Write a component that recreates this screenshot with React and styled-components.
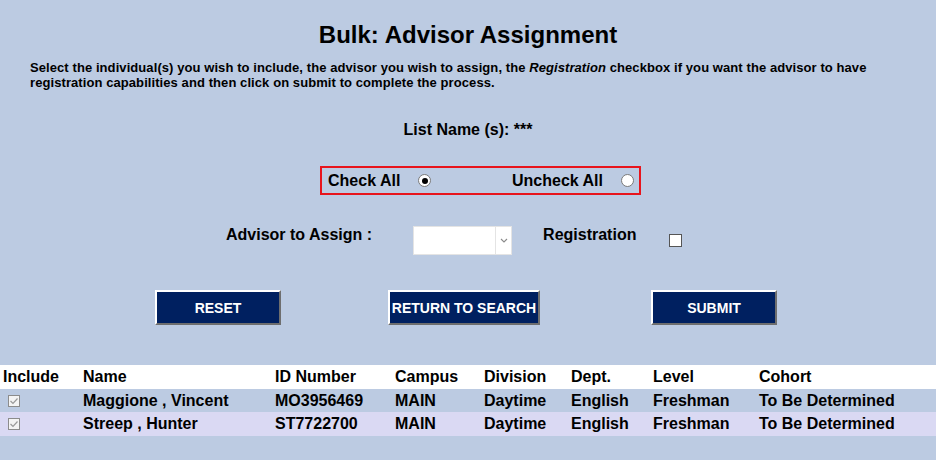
import React from 'react'
import styled, { createGlobalStyle } from 'styled-components'

const GlobalStyle = createGlobalStyle`
  html, body {
    margin: 0;
    padding: 0;
    background: #bccbe2;
  }
  body {
    font-family: "Liberation Sans", Arial, sans-serif;
    color: #000;
  }
`

const students = [
  { name: 'Maggione , Vincent', id: 'MO3956469', campus: 'MAIN', division: 'Daytime', dept: 'English', level: 'Freshman', cohort: 'To Be Determined' },
  { name: 'Streep , Hunter', id: 'ST7722700', campus: 'MAIN', division: 'Daytime', dept: 'English', level: 'Freshman', cohort: 'To Be Determined' },
]

export default function App() {
  return (
    <Page>
      <GlobalStyle />
      <Title>Bulk: Advisor Assignment</Title>
      <Intro>
        Select the individual(s) you wish to include, the advisor you wish to assign, the <em>Registration</em> checkbox if you want the advisor to have registration capabilities and then click on submit to complete the process.
      </Intro>
      <ListName>List Name (s): ***</ListName>

      <CheckBox>
        <RadioGroup>
          <span>Check All</span>
          <Radio checked />
        </RadioGroup>
        <RadioGroup>
          <span>Uncheck All</span>
          <Radio />
        </RadioGroup>
      </CheckBox>

      <AdvisorRow>
        <Label>Advisor to Assign :</Label>
        <SelectBox>
          <SelectArrow>
            <svg width="8" height="5" viewBox="0 0 8 5">
              <path d="M1 1 L4 4 L7 1" fill="none" stroke="#8a8a8a" strokeWidth="1.1" />
            </svg>
          </SelectArrow>
        </SelectBox>
        <Label $indent>Registration</Label>
        <Box />
      </AdvisorRow>

      <Buttons>
        <Button $w={126}>RESET</Button>
        <Button $w={152}>RETURN TO SEARCH</Button>
        <Button $w={126}>SUBMIT</Button>
      </Buttons>

      <Table>
        <HeadRow>
          <Cell>Include</Cell>
          <Cell>Name</Cell>
          <Cell>ID Number</Cell>
          <Cell>Campus</Cell>
          <Cell>Division</Cell>
          <Cell>Dept.</Cell>
          <Cell>Level</Cell>
          <Cell>Cohort</Cell>
        </HeadRow>
        {students.map((s, i) => (
          <BodyRow key={s.id} $alt={i % 2 === 1}>
            <Cell>
              <TickBox>
                <svg width="10" height="10" viewBox="0 0 10 10">
                  <path d="M1.5 5 L4 7.5 L8.5 2.5" fill="none" stroke="#9a9a9a" strokeWidth="1.2" />
                </svg>
              </TickBox>
            </Cell>
            <Cell>{s.name}</Cell>
            <Cell>{s.id}</Cell>
            <Cell>{s.campus}</Cell>
            <Cell>{s.division}</Cell>
            <Cell>{s.dept}</Cell>
            <Cell>{s.level}</Cell>
            <Cell>{s.cohort}</Cell>
          </BodyRow>
        ))}
      </Table>
    </Page>
  )
}

const Page = styled.div`
  padding-top: 21px;
  width: 936px;
`

const Title = styled.h1`
  margin: 0;
  font-size: 24px;
  line-height: 28px;
  font-weight: bold;
  text-align: center;
`

const Intro = styled.p`
  margin: 11px 0 0;
  padding: 0 20px 0 30px;
  font-size: 13px;
  letter-spacing: 0.08px;
  line-height: 15px;
  font-weight: bold;
  em {
    font-style: italic;
  }
`

const ListName = styled.div`
  margin-top: 31px;
  font-size: 16px;
  line-height: 18px;
  font-weight: bold;
  text-align: center;
`

const CheckBox = styled.div`
  margin: 27px 0 0 320px;
  width: 321px;
  height: 29px;
  box-sizing: border-box;
  border: 2px solid #e8141c;
  display: flex;
  align-items: center;
  justify-content: space-between;
  padding: 0 5px 0 6px;
`

const RadioGroup = styled.label`
  display: flex;
  align-items: center;
  gap: 18px;
  font-size: 16px;
  font-weight: bold;
`

const Radio = styled.span`
  width: 13px;
  height: 13px;
  box-sizing: border-box;
  border-radius: 50%;
  border: 1px solid #7a7a7a;
  background: #fff;
  position: relative;
  &::after {
    content: '';
    display: ${p => (p.checked ? 'block' : 'none')};
    position: absolute;
    left: 2.5px;
    top: 2.5px;
    width: 6px;
    height: 6px;
    border-radius: 50%;
    background: #000;
  }
`

const AdvisorRow = styled.div`
  margin-top: 31px;
  padding-left: 226px;
  display: flex;
  align-items: flex-start;
`

const Label = styled.span`
  font-size: 16px;
  line-height: 18px;
  font-weight: bold;
  margin-left: ${p => (p.$indent ? '31px' : '0')};
  margin-right: ${p => (p.$indent ? '33px' : '41px')};
`

const SelectBox = styled.div`
  width: 99px;
  height: 29px;
  box-sizing: border-box;
  background: #fff;
  border: 1px solid #e4e4e4;
  display: flex;
  justify-content: flex-end;
`

const SelectArrow = styled.div`
  width: 15px;
  border-left: 1px solid #e4e4e4;
  display: flex;
  align-items: center;
  justify-content: center;
`

const Box = styled.span`
  margin-top: 8px;
  width: 13px;
  height: 13px;
  box-sizing: border-box;
  border: 1px solid #555;
  background: #fff;
`

const Buttons = styled.div`
  margin-top: 35px;
  padding-left: 155px;
  display: grid;
  grid-template-columns: 233px 263px 126px;
`

const Button = styled.button`
  width: ${p => p.$w}px;
  height: 35px;
  box-sizing: border-box;
  background: #002060;
  color: #fff;
  font-family: "Liberation Sans", Arial, sans-serif;
  font-size: 14px;
  font-weight: bold;
  padding: 0;
  border: 2px solid;
  border-color: #fff #6e6e6e #6e6e6e #fff;
  cursor: pointer;
`

const Table = styled.div`
  margin-top: 40px;
  font-size: 16px;
  font-weight: bold;
`

const Row = styled.div`
  display: grid;
  grid-template-columns: 80px 192px 120px 89px 87px 82px 106px 1fr;
  align-items: center;
`

const HeadRow = styled(Row)`
  height: 24px;
  background: #fff;
`

const BodyRow = styled(Row)`
  height: ${p => (p.$alt ? '24px' : '23px')};
  background: ${p => (p.$alt ? '#dad9f3' : '#bccbe2')};
`

const Cell = styled.div`
  padding-left: 3px;
  white-space: nowrap;
  display: flex;
  align-items: center;
`

const TickBox = styled.span`
  margin-left: 5px;
  width: 12px;
  height: 12px;
  box-sizing: border-box;
  border: 1px solid #8c8c8c;
  background: #f4f4f4;
  display: flex;
  align-items: center;
  justify-content: center;
`
